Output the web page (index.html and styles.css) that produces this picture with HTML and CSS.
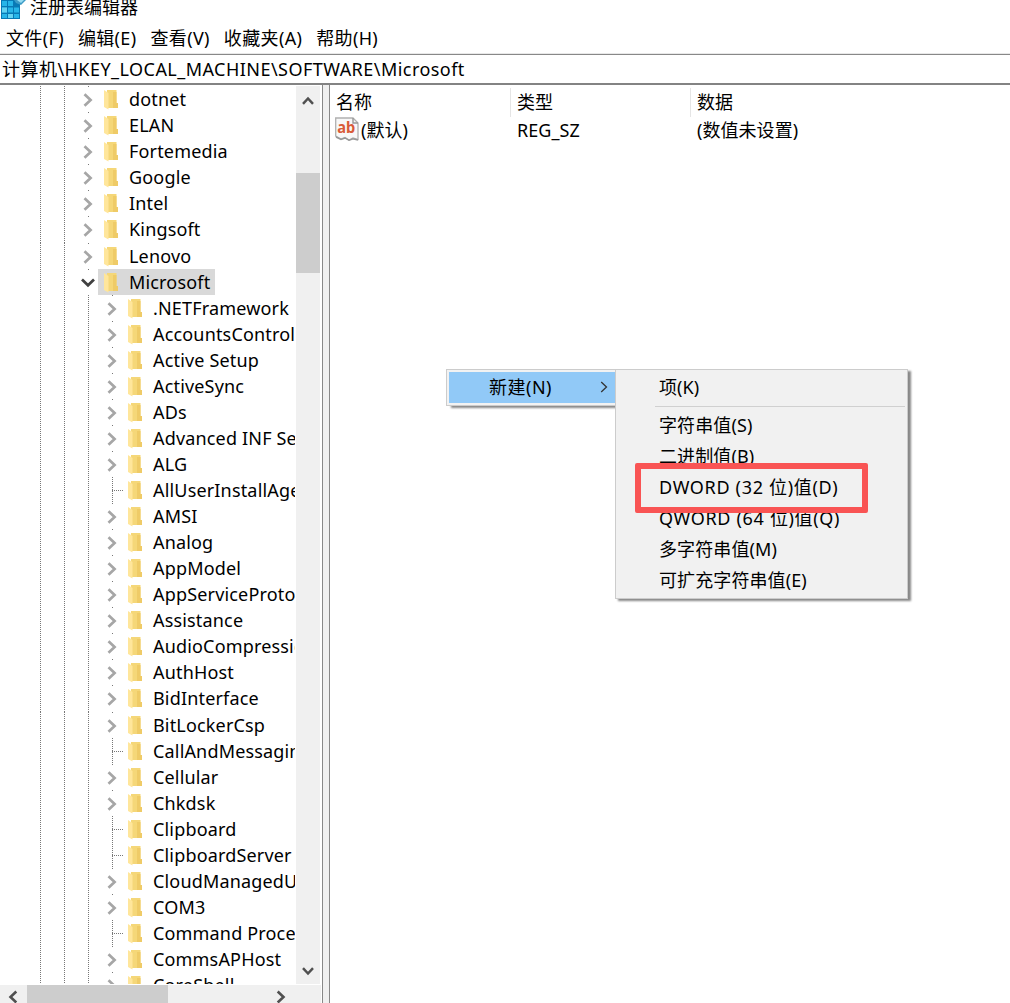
FILE: index.html
```
<!DOCTYPE html>
<html lang="zh-CN">
<head>
<meta charset="utf-8">
<title>注册表编辑器</title>
<link rel="stylesheet" href="styles.css">
</head>
<body>
<svg class="defs" width="0" height="0">
  <symbol id="folder" viewBox="0 0 15 21">
    <path d="M3 1H12.5V14H14V19H3Z" fill="#f5d778"/>
    <path d="M9 3H12.5V14H14V19H9Z" fill="#efcb67"/>
    <path d="M0 1L4.5 4V20.5L0 18Z" fill="#ffe69b"/>
  </symbol>
  <symbol id="closed" viewBox="0 0 10 14"><path d="M1.5 1.2L7.6 7L1.5 12.8" fill="none" stroke="#a6a6a6" stroke-width="2.7"/></symbol>
  <symbol id="open" viewBox="0 0 14 10"><path d="M1 1.5L7 7.3L13 1.5" fill="none" stroke="#404040" stroke-width="2.7"/></symbol>
</svg>
<div class="window">
  <header class="titlebar">
    <svg class="app-icon" width="26" height="20" viewBox="0 0 26 20">
      <path d="M1 0H20V19H1Z" fill="#0879b5"/>
      <path d="M2 1H7V6H2ZM8 1H13V6H8ZM2 7.5H7V12.5H2ZM8 7.5H13V12.5H8ZM2 14H7V18H2ZM8 14H13V18H8ZM14 7.5H19V12.5H14ZM14 14H19V18H14Z" fill="#27b5e8"/>
      <path d="M2 7.5H7V12.5H2ZM8 14H13V18H8Z" fill="#62d2f2"/>
      <path d="M14 0H26L21 5L16 3Z" fill="#3c9bc6"/>
      <path d="M17 0H24L21 3Z" fill="#96dcf2"/>
    </svg>
    <span>注册表编辑器</span>
  </header>
  <nav class="menubar"><span>文件(F)</span><span>编辑(E)</span><span>查看(V)</span><span>收藏夹(A)</span><span>帮助(H)</span></nav>
  <div class="address"><span>计算机\HKEY_LOCAL_MACHINE\SOFTWARE\Microsoft</span></div>
  <main class="panes">
    <section class="tree-pane">
      <div class="tree-body">
        <div class="tree" id="tree"></div>
        <div class="vscroll">
          <svg width="12" height="10" viewBox="0 0 12 10"><path d="M1 7.8L6 2.5L11 7.8" fill="none" stroke="#505050" stroke-width="2.5"/></svg>
          <div class="vthumb"></div>
          <svg class="down" width="12" height="10" viewBox="0 0 12 10"><path d="M1 2.2L6 7.5L11 2.2" fill="none" stroke="#505050" stroke-width="2.5"/></svg>
        </div>
      </div>
      <div class="hscroll">
        <svg width="10" height="14" viewBox="0 0 10 14"><path d="M8.3 1.5L2.5 7L8.3 12.5" fill="none" stroke="#505050" stroke-width="2.6"/></svg>
        <div class="hthumb"></div>
        <svg class="right" width="10" height="14" viewBox="0 0 10 14"><path d="M1.7 1.5L7.5 7L1.7 12.5" fill="none" stroke="#505050" stroke-width="2.6"/></svg>
      </div>
    </section>
    <div class="splitter"></div>
    <section class="values">
      <div class="value-row head"><span>名称</span><span>类型</span><span>数据</span></div>
      <div class="value-row">
        <span class="name"><svg width="24" height="24" viewBox="0 0 24 24">
          <path d="M.7 1H18L23 6V22.5L18 21L14 23L10 20.5L6 22L.7 19Z" fill="#f8f8f8" stroke="#b0b0b0" stroke-width="1.3"/>
          <path d="M18 1V6H23M1 20L6 22.5L10 21L14 23.3L18 21.8L23 23" fill="none" stroke="#989898" stroke-width="1.4"/>
          <text x="2.2" y="15.8" class="ab" textLength="18" lengthAdjust="spacingAndGlyphs">ab</text>
        </svg>(默认)</span><span>REG_SZ</span><span>(数值未设置)</span>
      </div>
    </section>
  </main>
</div>
<div class="context"><span>新建(N)</span><svg width="8" height="12" viewBox="0 0 8 12"><path d="M1.2 1L6.5 6L1.2 11" fill="none" stroke="#333" stroke-width="1.3"/></svg></div>
<div class="submenu">
  <div class="item first">项(K)</div>
  <div class="item">字符串值(S)</div>
  <div class="item">二进制值(B)</div>
  <div class="item wide">DWORD (32 位)值(D)</div>
  <div class="item wide">QWORD (64 位)值(Q)</div>
  <div class="item">多字符串值(M)</div>
  <div class="item">可扩充字符串值(E)</div>
</div>
<div class="highlight"></div>
<script src="tree.js"></script>
</body>
</html>
```
FILE: styles.css
```
* { box-sizing: border-box; }
body {
  margin: 0;
  width: 1010px;
  height: 1003px;
  overflow: hidden;
  background: #fff;
  color: #000;
  font: 18px/26px "Noto Sans", "Noto Sans CJK SC", sans-serif;
  white-space: nowrap;
}
svg { display: block; flex: none; }
.defs { position: absolute; }
.window { display: flex; flex-direction: column; height: 1003px; }
.titlebar { display: flex; height: 22px; }
.titlebar span { margin: -6px 0 0 4px; }
.menubar { display: flex; gap: 14px; height: 32px; padding: 3px 0 0 6px; border-bottom: 1px solid #e8e8e8; letter-spacing: .35px; }
.address { height: 31px; border-top: 1px solid #888; border-bottom: 2px solid #838383; padding: 1px 0 0 2px; letter-spacing: .46px; }
.panes { display: flex; height: 918px; }
.tree-pane { width: 323px; display: flex; flex-direction: column; border-right: 1px solid #888; }
.tree-body { display: flex; height: 899px; }
.tree { width: 295px; margin-right: 1px; padding-top: 1px; overflow: hidden; letter-spacing: .17px; }
.row { display: flex; height: 26px; padding-left: 40px; }
/* fractional row pitch: an extra pixel every eighteen rows */
.row:nth-child(18n + 6) { height: 27px; }
.row:nth-child(18n + 6) .label, .row:nth-child(18n + 6) .toggle { height: 26px; }
.guide { width: 24px; flex: none; background: repeating-linear-gradient(#777 0 1px, transparent 1px 2px) 0 0 / 1px 100% no-repeat; }
.guide.half { width: 12px; }
.toggle { width: 24px; flex: none; display: flex; align-items: center; justify-content: center; background: linear-gradient(#777, #777) 12px 0 / 1px 1px no-repeat; }
.toggle.leaf { background: repeating-linear-gradient(#777 0 1px, transparent 1px 2px) 12px 0 / 1px 100% no-repeat, repeating-linear-gradient(90deg, #777 0 1px, transparent 1px 2px) 12px 13px / 12px 1px no-repeat; }
.toggle svg { margin-top: 2px; }
.label { display: flex; padding: 0 4px; }
.label svg { margin: 3px 10px 0 0; }
.selected .label { background: #d9d9d9; margin-left: -2px; padding: 0 5px 0 6px; }
.vscroll { width: 24px; background: #f0f0f0; display: flex; flex-direction: column; align-items: center; padding: 10px 0 8px; margin-top: 1px; }
.vthumb { width: 24px; height: 100px; background: #cdcdcd; margin-top: 67px; }
.down { margin-top: auto; }
.hscroll { display: flex; align-items: flex-start; width: 321px; height: 18px; margin-top: 1px; padding: 5px 0 0 8px; background: #f0f0f0; overflow: hidden; }
.hthumb { width: 141px; height: 18px; margin: -5px 0 0 9px; background: #cdcdcd; }
.right { margin-left: 108px; }
.splitter { width: 7px; background: #f0f0f0; border-right: 1px solid #888; }
.values { flex: 1; padding-top: 3px; }
.value-row { display: grid; grid-template-columns: 181px 180px 1fr; height: 28px; letter-spacing: .05px; }
.value-row > span { padding: 0 0 0 6px; }
.head { height: 29px; }
.head > span { border-right: 1px solid #e5e5e5; height: 29px; padding-top: 1px; }
.head > span:last-child { border: 0; }
.value-row .name { display: flex; gap: 2px; padding-left: 5px; }
.ab { font: bold 16px "Noto Sans", sans-serif; fill: #d95b38; letter-spacing: 0; }
.context {
  position: absolute; left: 446px; top: 369px; width: 170px; height: 37px;
  display: flex; align-items: center; justify-content: space-between;
  padding: 0 8px 1px 42px; background: #91c9f7; border: 1px solid #ccc; border-right: 0;
  box-shadow: inset 2px 0 #f2f2f2, inset 0 2px #f2f2f2, inset 0 -2px #f2f2f2, 5px 2px 2px #888; letter-spacing: .5px;
}
.submenu {
  position: absolute; left: 615px; top: 369px; width: 293px; height: 230px; padding: 2px;
  background: #f1f1f1; border: 1px solid #ccc; box-shadow: 3px 2px 2px #888; letter-spacing: .1px;
}
.item { height: 31px; line-height: 31px; padding-left: 41px; }
.item.wide { letter-spacing: .67px; }
.item.first { height: 38px; background: linear-gradient(#d0d0d0, #d0d0d0) 37px 34px / 250px 1px no-repeat; }
.highlight { position: absolute; left: 635px; top: 463px; width: 233px; height: 50px; border: 6px solid #f95454; border-radius: 2px; }
```
FILE: tree.js
```
const keys = ['dotnet','ELAN','Fortemedia','Google','Intel','Kingsoft','Lenovo','Microsoft'];
const children = ['.NETFramework','AccountsControl','Active Setup','ActiveSync','ADs','Advanced INF Setup','ALG','AllUserInstallAgent','AMSI','Analog','AppModel','AppServiceProtocols','Assistance','AudioCompression','AuthHost','BidInterface','BitLockerCsp','CallAndMessaging','Cellular','Chkdsk','Clipboard','ClipboardServer','CloudManagedUpdate','COM3','Command Processor','CommsAPHost','CoreShell'];
const leaves = new Set(['AllUserInstallAgent','CallAndMessaging','Clipboard','ClipboardServer','Command Processor']);
const chevron = '<svg width="10" height="14"><use href="#closed"/></svg>';
const opened = '<svg width="14" height="10"><use href="#open"/></svg>';
const row = (name, depth) => {
  const leaf = leaves.has(name), sel = name === 'Microsoft';
  return `<div class="row${sel ? ' selected' : ''}">${'<i class="guide"></i>'.repeat(depth)}<i class="guide half"></i>` +
    `<span class="toggle${leaf ? ' leaf' : ''}">${leaf ? '' : sel ? opened : chevron}</span>` +
    `<span class="label"><svg width="15" height="21"><use href="#folder"/></svg>${name}</span></div>`;
};
document.getElementById('tree').innerHTML = keys.map(k => row(k, 1)).join('') + children.map(k => row(k, 2)).join('');
```
